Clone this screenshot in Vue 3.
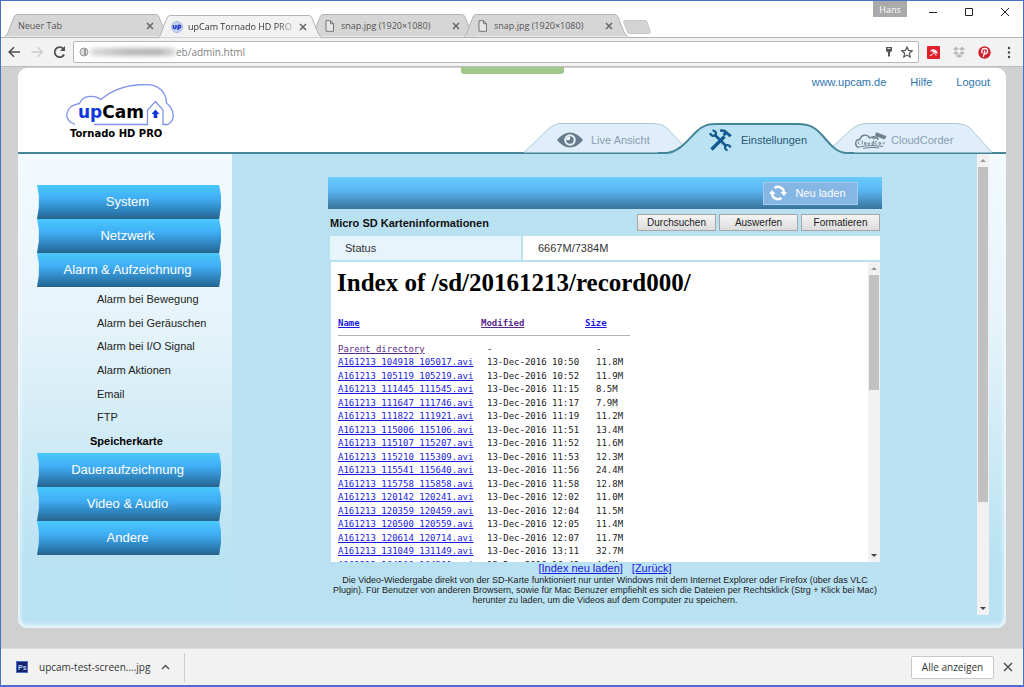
<script setup>
import { ref } from 'vue'

const address = ref('eb/admin.html')

const browserTabs = [
  { title: 'Neuer Tab', icon: null, active: false },
  { title: 'upCam Tornado HD PRO', icon: 'up', active: true },
  { title: 'snap.jpg (1920×1080)', icon: 'page', active: false },
  { title: 'snap.jpg (1920×1080)', icon: 'page', active: false },
]

const menuTop = ['System', 'Netzwerk', 'Alarm & Aufzeichnung']
const submenu = ['Alarm bei Bewegung', 'Alarm bei Geräuschen', 'Alarm bei I/O Signal', 'Alarm Aktionen', 'Email', 'FTP', 'Speicherkarte']
const menuBottom = ['Daueraufzeichnung', 'Video & Audio', 'Andere']

const files = [
  ['104918_105017', '10:50', '11.8M'],
  ['105119_105219', '10:52', '11.9M'],
  ['111445_111545', '11:15', '8.5M'],
  ['111647_111746', '11:17', '7.9M'],
  ['111822_111921', '11:19', '11.2M'],
  ['115006_115106', '11:51', '13.4M'],
  ['115107_115207', '11:52', '11.6M'],
  ['115210_115309', '11:53', '12.3M'],
  ['115541_115640', '11:56', '24.4M'],
  ['115758_115858', '11:58', '12.8M'],
  ['120142_120241', '12:02', '11.0M'],
  ['120359_120459', '12:04', '11.5M'],
  ['120500_120559', '12:05', '11.4M'],
  ['120614_120714', '12:07', '11.7M'],
  ['131049_131149', '13:11', '32.7M'],
  ['164200_164300', '16:43', '4.4M'],
]
</script>

<template>
  <div class="window">
    <header class="titlebar">
      <div class="tabstrip">
        <div v-for="(t, i) in browserTabs" :key="i" class="tab" :class="{ active: t.active }">
          <svg class="tab-shape" width="164" height="23" viewBox="0 0 164 23" aria-hidden="true">
            <path d="M0 22.5C3 21 3 18 5 13L9 3Q10 .5 12 .5H151Q153 .5 154 3L158 13C160 18 161 21 164 22.5" />
          </svg>
          <svg v-if="t.icon === 'up'" class="tab-icon" width="12" height="12" viewBox="0 0 12 12" aria-hidden="true">
            <circle cx="6" cy="6" r="5.5" fill="#c3d2f0" stroke="#a8b9dd" />
            <path d="M2.5 4v2.2q0 1.2 1.2 1.2T5 6.200V4M7 9V5.500q0-1.300 1.300-1.300T9.600 5.600 8.300 7H7" fill="none" stroke="#2438c8" stroke-width="1.500" />
          </svg>
          <svg v-if="t.icon === 'page'" class="tab-icon" width="12" height="12" viewBox="0 0 12 12" aria-hidden="true">
            <path d="M2 .7h4.500l3 3v7.600H2zM6.500.7v3h3" fill="#e6e6e6" stroke="#777" />
          </svg>
          <span class="tab-title">{{ t.title }}</span>
          <button class="tab-close" aria-label="Tab schließen">
            <svg width="8" height="8" viewBox="0 0 8 8"><path d="M1 1l6 6M7 1L1 7" stroke="#666" stroke-width="1.500" /></svg>
          </button>
        </div>
        <button class="new-tab" aria-label="Neuer Tab">
          <svg width="28" height="14" viewBox="0 0 28 14"><path d="M2 .5h20q1.500 0 2 1.300l3 9q.8 2.700-1.500 2.700H7q-2 0-2.600-1.500L.8 2.300Q.3.500 2 .5z" fill="#d4d4d4" stroke="#c6c6c6" /></svg>
        </button>
      </div>
      <div class="window-controls">
        <button class="user">Hans</button>
        <button aria-label="Minimieren"><svg width="10" height="10" viewBox="0 0 10 10"><path d="M1 5.500h8" stroke="#222" /></svg></button>
        <button aria-label="Maximieren"><svg width="10" height="10" viewBox="0 0 10 10"><path d="M1.500 1.500h7v7h-7z" fill="none" stroke="#222" /></svg></button>
        <button aria-label="Schließen"><svg width="10" height="10" viewBox="0 0 10 10"><path d="M1 1l8 8M9 1L1 9" stroke="#222" /></svg></button>
      </div>
    </header>

    <div class="toolbar">
      <button aria-label="Zurück"><svg width="14" height="12" viewBox="0 0 14 12"><path d="M12 6H1.500M6 1.200L1.200 6l4.800 4.800" fill="none" stroke="#505050" stroke-width="1.600" /></svg></button>
      <button aria-label="Vorwärts"><svg width="14" height="12" viewBox="0 0 14 12"><path d="M1.500 6h10M7.500 1.200L12.300 6l-4.800 4.800" fill="none" stroke="#ccc" stroke-width="1.400" /></svg></button>
      <button aria-label="Aktualisieren"><svg width="14" height="14" viewBox="0 0 14 14"><path d="M12.100 9.500A5 5 0 1 1 11.300 3.700" fill="none" stroke="#505050" stroke-width="1.800" /><path d="M13 1v5H8z" fill="#505050" /></svg></button>
      <label class="address">
        <svg width="10" height="12" viewBox="0 0 10 12" aria-hidden="true"><circle cx="5" cy="6" r="4" fill="#ddd" stroke="#999" /><path d="M6 3v6" stroke="#999" stroke-width="2" /></svg>
        <span class="smudge"></span>
        <input v-model="address" type="text" aria-label="Adresse" />
        <svg width="10" height="12" viewBox="0 0 10 12" aria-hidden="true"><path d="M2 1h6v4L6 6.500V10L5 11 4 10V6.500L2 5z" fill="#555" /><path d="M3.500 2.500h3" stroke="#ddd" /></svg>
        <svg width="12" height="12" viewBox="0 0 12 12" aria-hidden="true"><path d="M6 1l1.500 3.400 3.700.4-2.800 2.500.8 3.700L6 9.100 2.800 11l.8-3.700L.8 4.800l3.700-.4z" fill="none" stroke="#555" stroke-width="1.200" /></svg>
      </label>
      <div class="extensions">
        <button aria-label="Avira"><svg width="13" height="13" viewBox="0 0 13 13"><rect width="13" height="13" rx="1" fill="#e1202c" /><path d="M3 5.500Q5 2.300 8 3.800T10.300 8Q8.500 6.300 7 6.500 5 4.500 3 5.500z" fill="#fff" /><path d="M7.200 6Q5.500 9.500 2.800 9.500M7.500 7l1.800 2.800" fill="none" stroke="#fff" /></svg></button>
        <button aria-label="Dropbox"><svg width="14" height="13" viewBox="0 0 14 13"><path d="M4 .8L7 3 4 5 1 3zM10 .8L13 3l-3 2-3-2zM4 5l3 2-3 2-3-2zM10 5l3 2-3 2-3-2z" fill="#bbb" /><path d="M7 3l3 2-3 2-3-2z" fill="#f2f2f2" /><path d="M3.500 10L7 8l3.500 2L7 12z" fill="#bbb" /></svg></button>
        <button aria-label="Pinterest"><svg width="13" height="13" viewBox="0 0 13 13"><circle cx="6.500" cy="6.500" r="6.200" fill="#cf1f2b" /><path d="M4.300 7.200C2.500 3.800 5 2.500 6.700 2.500c2 0 3.100 1.200 2.900 2.900C9.300 7.600 7 8.500 6.200 7.200M6.900 4.500L5.300 11" fill="none" stroke="#fff" stroke-width="1.300" /></svg></button>
        <button class="more" aria-label="Menü"><svg width="6" height="13" viewBox="0 0 6 13" fill="#444"><circle cx="3" cy="2" r="1.200" /><circle cx="3" cy="6.500" r="1.200" /><circle cx="3" cy="11" r="1.200" /></svg></button>
      </div>
    </div>

    <main class="page">
      <div class="notch"></div>
      <div class="card">
        <div class="card-head">
          <a href="#" class="logo" aria-label="upCam Tornado HD PRO">
            <svg width="112" height="58" viewBox="0 0 112 58">
              <path d="M10 40.500C-2 37-1 22 14.500 19.500 18 10.500 30 11 36 15.500 50 3 68 .5 81 .5 95 .5 101 9 101.500 19 109 25 111 36 103 40.500H98V26L90.500 17.500 82.500 26V40.500H29" fill="none" stroke="#8093ea" stroke-width="1.300" />
              <path d="M90.500 25.500l4 4.500h-2.200v4h-3.600v-4h-2.200z" fill="#1136e0" />
              <text class="brand" x="13" y="34"><tspan fill="#1136e0">up</tspan><tspan fill="#000">Cam</tspan></text>
              <text class="model" x="5" y="53">Tornado HD PRO</text>
            </svg>
          </a>
          <div class="head-right">
            <nav class="links">
              <a href="#">www.upcam.de</a><a href="#">Hilfe</a><a href="#">Logout</a>
            </nav>
            <nav class="sections">
              <svg class="sections-shape" width="488" height="32" viewBox="0 0 488 32" aria-hidden="true">
                <path d="M6 30.500C20 17 26 11 31 6.500 35 3 38 1.500 45 1.500H132C142 1.500 146 3 150 7L172 30.500" fill="#dfeefa" stroke="#a9c6d6" />
                <path d="M308 30.500L334 7Q340 1.500 350 1.500H437Q447 1.500 452 6L474 30.500" fill="#dfeefa" stroke="#a9c6d6" />
                <path d="M140 31H149C161 30 170 18 178 10 185 3 190 2 200 2H280C292 2 298 6 304 13 314 25 320 31 329 31V32H140z" fill="#bae2f3" />
                <path d="M140 31H149C161 30 170 18 178 10 185 3 190 2 200 2H280C292 2 298 6 304 13 314 25 320 31 329 31H336" fill="none" stroke="#468598" stroke-width="2" />
              </svg>
              <a href="#" class="section live">
                <svg width="26" height="16" viewBox="0 0 26 16" aria-hidden="true"><path d="M0 8Q6 .5 13 .5T26 8Q20 15.500 13 15.500T0 8z" fill="#687b8c" /><circle cx="13" cy="8" r="5.800" fill="#e4f0f9" /><circle cx="13" cy="8" r="3.700" fill="#687b8c" /><path d="M13 4.300V8H9.300Q9.500 4.800 13 4.300" fill="#fff" /></svg>
                Live Ansicht
              </a>
              <a href="#" class="section current">
                <svg width="23" height="23" viewBox="0 0 23 23" aria-hidden="true" fill="none" stroke="#135b8f">
                  <path d="M5.500 5.500L17.500 17.500" stroke-width="2.600" /><path d="M3.500 1.200Q7 2 7 4.500 6.500 7 4 6.800 1.800 6.500 1.200 4M21.500 18.500Q20.500 15.800 18 16 15.800 16.500 16 19 16.500 21 18.500 21.500" stroke-width="2.200" />
                  <path d="M2.500 20.500L15.500 7.500" stroke-width="3.400" /><path d="M11 1.800Q15 .8 17.500 3.500L20.500 6.500 22 5.500" stroke-width="2.600" /><path d="M14.500 6l3-2.500" stroke-width="3" />
                </svg>
                Einstellungen
              </a>
              <a href="#" class="section cloud">
                <svg width="32" height="17" viewBox="0 0 32 17" aria-hidden="true" fill="none" stroke="#6f8190">
                  <path d="M4 15.500C-1 14 0 7 5 7.500 6 2.500 12 1.500 15 6 19 3.500 23 5 23 8" stroke-width="1.400" />
                  <path d="M17 5.500q2.500 1.500 5 0" stroke-width="1.400" /><path d="M21.500.8L31 4.500 29.500 7 20.500 3.500z" fill="#6f8190" />
                  <path d="M3.800 9.500q-1.800 1.500.7 3M7.200 8.500v4M9.500 10.500h1.500v1.800H9.500zM13 10.500v1.800h1.500v-1.800M18.500 8.500v4H17v-1.800h1.500M22 9.300q-2-.3-2 1.500t2 1.500M24 10.500h1.500v1.800H24zM28 10.500v2M30 10.500l-1.500.7" stroke-width=".9" />
                  <path d="M4 15Q14 12.500 28 14.500M8 16.300q8-1.500 16-.5" />
                </svg>
                CloudCorder
              </a>
            </nav>
          </div>
        </div>

        <div class="card-body">
          <nav class="sidebar">
            <button v-for="m in menuTop" :key="m" class="menu">{{ m }}</button>
            <div class="submenu">
              <a v-for="s in submenu" :key="s" href="#" :class="{ selected: s === 'Speicherkarte' }">{{ s }}</a>
            </div>
            <button v-for="m in menuBottom" :key="m" class="menu">{{ m }}</button>
          </nav>

          <section class="content">
            <div class="panel">
              <div class="bar">
                <button class="reload">
                  <svg width="18" height="16" viewBox="0 0 18 16" aria-hidden="true"><path d="M3 9A6 6 0 0 0 12.500 13M15 7A6 6 0 0 0 5.500 3" fill="none" stroke="#fff" stroke-width="2.400" /><path d="M0 9L3 5l3.500 4zM11.500 7h6.500L15 11z" fill="#fff" /></svg>
                  Neu laden
                </button>
              </div>
              <div class="info-row">
                <h2>Micro SD Karteninformationen</h2>
                <button class="btn">Durchsuchen</button>
                <button class="btn">Auswerfen</button>
                <button class="btn">Formatieren</button>
              </div>
              <table class="status">
                <tbody><tr><th scope="row">Status</th><td>6667M/7384M</td></tr></tbody>
              </table>
              <div class="listing">
                <div class="listing-main">
                  <h1>Index of /sd/20161213/record000/</h1>
                  <table class="files">
                    <thead>
                      <tr><th><a href="#">Name</a></th><th><a href="#" class="visited">Modified</a></th><th><a href="#">Size</a></th></tr>
                    </thead>
                    <tbody>
                      <tr><td><a href="#" class="visited">Parent directory</a></td><td>-</td><td>-</td></tr>
                      <tr v-for="f in files" :key="f[0]">
                        <td><a href="#">A161213_{{ f[0] }}.avi</a></td><td>13-Dec-2016 {{ f[1] }}</td><td>{{ f[2] }}</td>
                      </tr>
                    </tbody>
                  </table>
                </div>
                <div class="scrollbar" aria-hidden="true"><i class="up"></i><span class="track"><b class="thumb short"></b></span><i class="down"></i></div>
              </div>
              <div class="list-links"><a href="#">[Index neu laden]</a><a href="#">[Zurück]</a></div>
              <p class="note">Die Video-Wiedergabe direkt von der SD-Karte funktioniert nur unter Windows mit dem Internet Explorer oder Firefox (über das VLC Plugin). Für Benutzer von anderen Browsern, sowie für Mac Benuzer empfiehlt es sich die Dateien per Rechtsklick (Strg + Klick bei Mac) herunter zu laden, um die Videos auf dem Computer zu speichern.</p>
            </div>
          </section>
          <div class="scrollbar outer" aria-hidden="true"><i class="up"></i><span class="track"><b class="thumb long"></b></span><i class="down"></i></div>
        </div>
      </div>
    </main>

    <footer class="downloads">
      <button class="download">
        <svg width="12" height="12" viewBox="0 0 12 12" aria-hidden="true"><rect x=".5" y=".5" width="11" height="11" fill="#16206b" stroke="#4a6ec8" /><text class="ps" x="2" y="9">Ps</text></svg>
        <span>upcam-test-screen....jpg</span>
        <svg width="9" height="6" viewBox="0 0 9 6" aria-hidden="true"><path d="M1 5l3.500-3.500L8 5" fill="none" stroke="#555" stroke-width="1.500" /></svg>
      </button>
      <button class="show-all">Alle anzeigen</button>
      <button class="close-bar" aria-label="Leiste schließen"><svg width="10" height="10" viewBox="0 0 10 10"><path d="M1 1l8 8M9 1L1 9" stroke="#555" stroke-width="1.600" /></svg></button>
    </footer>
  </div>
</template>

<style>
html, body { height: 100%; }
body { margin: 0; }
</style>

<style scoped>
* { box-sizing: border-box; }
button { border: 0; padding: 0; margin: 0; background: none; font: inherit; color: inherit; }
button, a { display: inline-flex; align-items: center; justify-content: center; }
svg { display: block; flex: none; }
a { text-decoration: none; }

.window {
  min-height: 100vh;
  display: flex;
  flex-direction: column;
  border: 1px solid #4a6fc8;
  border-bottom-width: 2px;
  font-family: "Liberation Sans", Arial, sans-serif;
  background: #f1f1f1;
}
.titlebar, .toolbar, .downloads { font-family: "Open Sans", "Noto Sans", sans-serif; }

.titlebar { display: flex; height: 37px; background: #fff; border-bottom: 1px solid #b4b4b4; }
.tabstrip { display: flex; align-items: flex-end; flex: 1; padding-left: 4px; }
.tab {
  position: relative;
  display: flex;
  align-items: center;
  width: 164px;
  height: 23px;
  margin-right: -11px;
  padding: 0 15px 0 13px;
  font-size: 9px;
  color: #555;
}
.tab.active { z-index: 1; margin-bottom: -1px; color: #333; }
.tab-shape { position: absolute; inset: 0; fill: #d6d6d6; stroke: #b4b4b4; }
.active .tab-shape { fill: #f2f2f2; }
.tab-icon { position: relative; margin-right: 5px; }
.tab-title { position: relative; flex: 1; white-space: nowrap; }
.active .tab-title { mask-image: linear-gradient(90deg, #000 84%, #0004); }
.tab-close { position: relative; margin-left: 6px; }
.new-tab { margin: 0 0 3px 6px; }
.window-controls { display: flex; align-items: flex-start; gap: 26px; padding-right: 13px; }
.window-controls button { margin-top: 6px; }
.window-controls .user { width: 34px; height: 16px; margin: 0 -5px 0 0; background: #aaa; color: #fff; font-size: 9px; }

.toolbar { display: flex; align-items: center; height: 29px; padding: 0 11px 0 7px; gap: 8px; background: #f2f2f2; border-bottom: 1px solid #bcbcbc; }
.address { display: flex; align-items: center; flex: 1; height: 22px; margin-left: -1px; padding: 0 5px; gap: 7px; background: #fff; border: 1px solid #b8b8b8; border-radius: 2px; }
.smudge { width: 86px; height: 8px; margin: 0 -7px 0 -6px; border-radius: 5px; background: linear-gradient(90deg, #ddd, #bbb 40%, #b4b4b4 80%, #ddd); filter: blur(2px); }
.address input { flex: 1; min-width: 0; padding: 0; border: 0; outline: 0; background: none; font: 10px "Open Sans", "Noto Sans", sans-serif; color: #808080; }
.extensions { display: flex; align-items: center; gap: 12px; }
.more { margin-left: 3px; }

.page { position: relative; flex: 1; display: flex; padding: 1px 17px 20px; background: #d0d0d0; }
.notch { position: absolute; z-index: 2; top: 0; left: 45%; width: 103px; height: 7px; background: #a0c88c; border-radius: 0 0 3px 3px; }
.card { flex: 1; display: flex; flex-direction: column; border-radius: 9px; overflow: hidden; background: #fff; }
.card-head { display: flex; justify-content: space-between; height: 86px; border-bottom: 2px solid #468598; }
.logo { align-self: flex-start; margin: 16px 0 0 47px; }
.brand { font: bold 17px "DejaVu Sans", sans-serif; }
.model { font: bold 10px "DejaVu Sans", sans-serif; fill: #000; }
.head-right { display: flex; flex-direction: column; justify-content: space-between; align-items: flex-end; }
.links { display: flex; gap: 24px; padding: 6px 16px 0 0; font-size: 11px; line-height: 16px; }
.links a { color: #2c74ad; }
.sections { position: relative; display: flex; width: 488px; height: 32px; margin-bottom: -2px; font-size: 11px; }
.sections-shape { position: absolute; inset: 0; }
.section { position: relative; justify-content: flex-start; gap: 8px; height: 32px; padding-top: 4px; color: #8a9db0; }
.live { margin-left: 39px; width: 152px; }
.current { width: 146px; gap: 9px; color: #2b5876; }
.cloud { gap: 4px; }

.card-body {
  flex: 1;
  display: flex;
  padding-right: 17px;
  background: linear-gradient(#f3fafd, #e6f4fa 35%, #b8e1f2 88%);
  box-shadow: inset 0 -4px 4px -1px #e8f6fc, inset 4px 0 4px -2px #f2fafd, inset -4px 0 4px -2px #f2fafd;
  border-radius: 0 0 9px 9px;
}
.sidebar { width: 214px; padding: 31px 11px 0 19px; }
.menu {
  width: 100%;
  height: 34px;
  font-size: 13px;
  color: #fff;
  padding: 0 3px 2px 0;
  background: linear-gradient(#4ac8fc, #3fadf4 40%, #2a76aa 85%, #246589);
  clip-path: polygon(0 0, 99% 0, 100% 30%, 100% 65%, 99% 100%, 0 100%, 1% 65%, 1% 30%);
}
.submenu { display: grid; grid-auto-rows: 1fr; height: 166px; padding-left: 60px; font-size: 11px; }
.submenu a { justify-content: flex-start; color: #222; }
.submenu .selected { margin-left: -7px; font-weight: bold; color: #000; }

.content { flex: 1; margin-bottom: 13px; padding: 23px 95px 0 96px; background: #bae1f2; }
.bar { display: flex; justify-content: flex-end; align-items: center; height: 32px; padding-right: 24px; background: linear-gradient(#69cbfa, #5bb7f4 40%, #39749b); }
.reload { width: 95px; height: 23px; gap: 8px; padding-right: 6px; border: 1px solid #a3caef; background: #86b6e4; color: #fff; font-size: 11px; }
.info-row { display: flex; align-items: center; gap: 3px; height: 27px; padding: 0 2px; }
.info-row h2 { flex: 1; margin: 0; font-size: 11px; color: #111; }
.btn { width: 79px; height: 17px; border: 1px solid #a6a6a6; background: linear-gradient(#f5f5f5, #dcdcdc); font-size: 10px; color: #222; }
.status { width: calc(100% - 4px); margin-left: 2px; border-collapse: collapse; font-size: 11px; color: #333; }
.status th, .status td { height: 24px; padding: 0 15px; text-align: left; font-weight: normal; background: #fff; }
.status th { width: 192px; background: #e6f4fb; border-right: 2px solid #bae1f2; }
.listing { display: flex; height: 300px; margin: 2px 2px 0 3px; background: #fff; overflow: hidden; }
.listing-main { flex: 1; padding: 6px 7px 0 6px; overflow: hidden; }
.listing h1 { margin: 0; font: bold 25px/30px "Liberation Serif", "Times New Roman", serif; color: #000; white-space: nowrap; }
.files { width: 292px; height: 255px; margin: 19px 0 0 1px; table-layout: fixed; border-collapse: collapse; font: 9px/13px "DejaVu Sans Mono", monospace; color: #222; }
.files th, .files td { padding: 0; text-align: left; white-space: nowrap; }
.files th { height: 18px; padding-bottom: 5px; border-bottom: 1px solid #b4b4b4; }
.files tbody::before { content: ""; display: table-row; height: 7px; }
.files th:nth-child(1) { width: 149px; }
.files th:nth-child(2) { width: 109px; }
.files th:nth-child(2) a { margin-left: -6px; }
.files th:nth-child(3) a { margin-left: -11px; }
.files a { display: inline; color: #1a1ae0; text-decoration: underline; }
.files a.visited { color: #5a2a8a; }
.scrollbar { display: flex; flex-direction: column; width: 12px; background: #f1f1f1; }
.scrollbar i { display: flex; align-items: center; justify-content: center; height: 13px; }
.scrollbar i::before { content: ""; border: 3px solid transparent; }
.scrollbar .up::before { border-top: 0; border-bottom-color: #999; }
.scrollbar .down::before { border-bottom: 0; border-top-color: #444; }
.track { flex: 1; padding: 0 1px; }
.thumb { display: block; background: #c1c1c1; }
.short { height: 42%; }
.long { height: 77%; }
.outer { margin-bottom: 13px; }
.list-links { display: flex; justify-content: center; gap: 9px; font-size: 11px; line-height: 13px; }
.list-links a { color: #1a1ae0; text-decoration: underline; }
.note { margin: 0; text-align: center; font-size: 9px; line-height: 10px; color: #222; }

.downloads { display: flex; align-items: center; height: 37px; padding-right: 10px; background: #f2f2f2; border-top: 1px solid #ddd; font-size: 10px; color: #333; }
.download { height: 29px; gap: 11px; padding: 0 14px 0 15px; border-right: 1px solid #ccc; }
.ps { font: bold 7px "Liberation Sans", sans-serif; fill: #b9d2ff; }
.show-all { width: 83px; height: 23px; margin-left: auto; border: 1px solid #c8c8c8; border-radius: 2px; background: #fff; }
.close-bar { margin-left: 9px; }
</style>
